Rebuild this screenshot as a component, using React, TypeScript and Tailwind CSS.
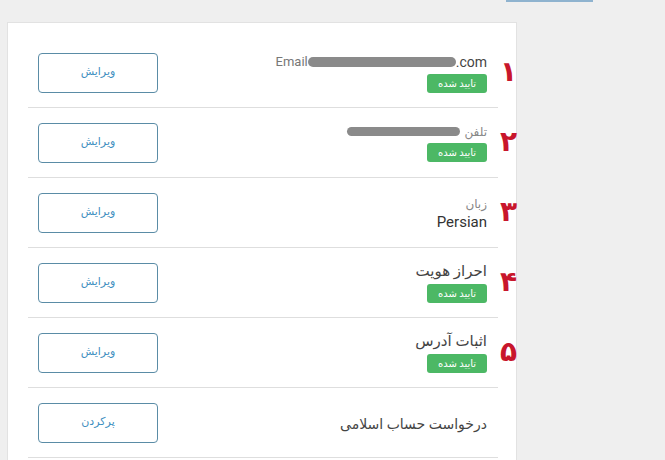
import React from 'react';

const FONT = { fontFamily: "Roboto, 'DejaVu Sans', sans-serif" };

const Badge: React.FC = () => (
  <span className="inline-flex h-[19px] w-[60px] items-center justify-center rounded-[3px] bg-[#4cb865] text-[10px] text-white">
    تایید شده
  </span>
);

const ActionButton: React.FC<{ label: string }> = ({ label }) => (
  <button className="flex h-[40px] w-[120px] items-center justify-center rounded-[4px] border border-[#5a8ca6] bg-white text-[11px] text-[#3f8fc0]">
    {label}
  </button>
);

const Row: React.FC<{ num?: string; children: React.ReactNode; action: string }> = ({ num, children, action }) => (
  <div className="relative flex h-[70px] items-center justify-between border-b border-[#dedede] pl-[10px] pr-[11px]">
    <ActionButton label={action} />
    <div dir="rtl" className="flex flex-col items-start gap-[5px] pt-[2px]">
      {children}
    </div>
    {num && (
      <span className="absolute left-full top-1/2 ml-[2px] -translate-y-[55%] text-[28px] font-bold leading-none text-[#c8162c]">
        {num}
      </span>
    )}
  </div>
);

export default function App() {
  return (
    <div className="h-[460px] w-[665px] overflow-hidden bg-[#efefef]" style={FONT}>
      <div className="ml-[506px] h-[2px] w-[87px] bg-[#8fb3cf]" />
      <div className="ml-[7px] mt-[20px] h-[500px] w-[510px] border border-[#e2e2e2] bg-white pl-[20px] pr-[18px] pt-[15px]">
        <Row num="۱" action="ویرایش">
          <div dir="ltr" className="flex items-center leading-none">
            <span className="text-[13px] text-[#777]">Email</span>
            <span className="h-[10px] w-[148px] rounded-full bg-[#8a8a8a]" />
            <span className="text-[14px] text-[#444]">.com</span>
          </div>
          <Badge />
        </Row>
        <Row num="۲" action="ویرایش">
          <div className="flex items-center gap-[4px] leading-none">
            <span className="text-[12px] text-[#888]">تلفن</span>
            <span className="h-[9px] w-[113px] rounded-full bg-[#8a8a8a]" />
          </div>
          <Badge />
        </Row>
        <Row num="۳" action="ویرایش">
          <span className="text-[12px] leading-none text-[#888]">زبان</span>
          <span dir="ltr" className="text-[15px] leading-none text-[#333]">Persian</span>
        </Row>
        <Row num="۴" action="ویرایش">
          <span className="text-[15px] leading-none text-[#444]">احراز هویت</span>
          <Badge />
        </Row>
        <Row num="۵" action="ویرایش">
          <span className="text-[15px] leading-none text-[#444]">اثبات آدرس</span>
          <Badge />
        </Row>
        <Row action="پرکردن">
          <span className="text-[14px] leading-none text-[#444]">درخواست حساب اسلامی</span>
        </Row>
      </div>
    </div>
  );
}
